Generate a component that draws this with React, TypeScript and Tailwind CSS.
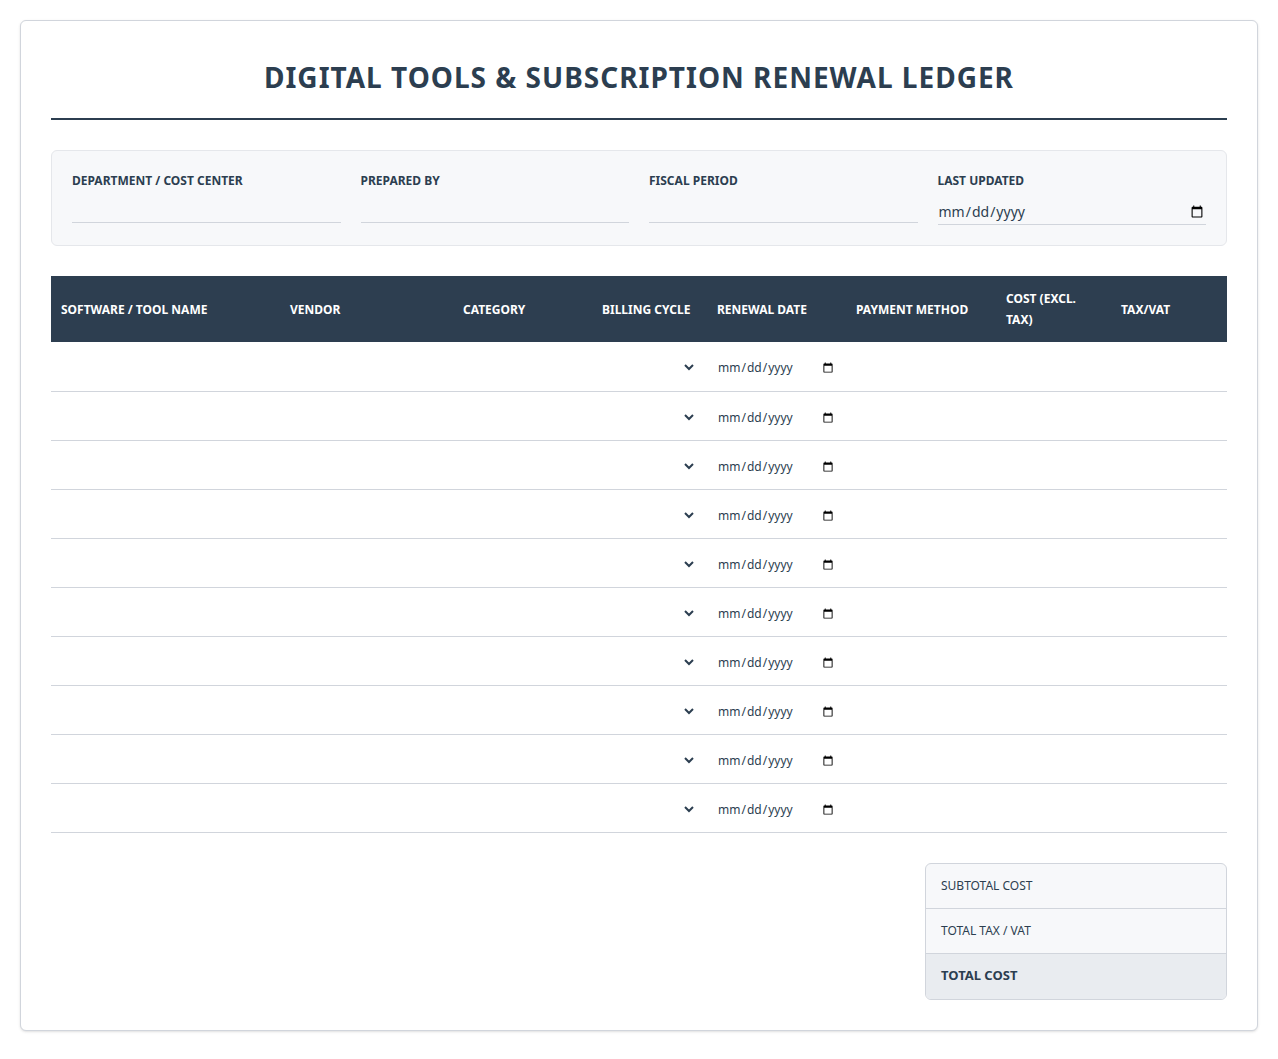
const cols = [
  { label: "SOFTWARE / TOOL NAME", w: "w-[229px]" },
  { label: "VENDOR", w: "w-[173px]" },
  { label: "CATEGORY", w: "w-[139px]" },
  { label: "BILLING CYCLE", w: "w-[115px]" },
  { label: "RENEWAL DATE", w: "w-[139px]" },
  { label: "PAYMENT METHOD", w: "w-[150px]" },
  { label: "COST (EXCL. TAX)", w: "w-[115px]" },
  { label: "TAX/VAT", w: "w-[116px]" },
]

const meta = ["DEPARTMENT / COST CENTER", "PREPARED BY", "FISCAL PERIOD", "LAST UPDATED"]

export default function App() {
  return (
    <div className="min-h-screen bg-white p-5 font-['Open_Sans',sans-serif] text-[#2c3e50]">
      <div className="rounded-md border border-gray-300 bg-white px-[30px] pb-[30px] pt-[35px] shadow-sm">
        <h1 className="text-center text-[28px] font-bold tracking-[1px] text-[#2c3e50]">
          DIGITAL TOOLS &amp; SUBSCRIPTION RENEWAL LEDGER
        </h1>
        <div className="mt-[20px] h-[2px] bg-[#2c3e50]" />

        <div className="mt-[30px] grid grid-cols-4 gap-5 rounded-md border border-gray-200 bg-[#f7f8fa] px-5 pb-5 pt-[22px]">
          {meta.map((m, i) => (
            <div key={m} className="flex flex-col">
              <label className="text-xs font-bold">{m}</label>
              {i === 3 ? (
                <input type="date" className="mt-[10px] h-[26px] border-b border-gray-300 bg-transparent text-sm outline-none" />
              ) : (
                <input className="mt-[10px] h-[24px] border-b border-gray-300 bg-transparent text-sm outline-none" />
              )}
            </div>
          ))}
        </div>

        <table className="mt-[30px] w-full table-fixed border-collapse">
          <thead>
            <tr className="h-[66px] bg-[#2d3e50] text-white">
              {cols.map((c) => (
                <th key={c.label} className={`${c.w} px-[10px] text-left text-xs font-bold leading-[21px]`}>
                  {c.label}
                </th>
              ))}
            </tr>
          </thead>
          <tbody>
            {Array.from({ length: 10 }).map((_, r) => (
              <tr key={r} className="h-[49px] border-b border-gray-300">
                <td />
                <td />
                <td />
                <td className="px-[10px]">
                  <select className="w-full bg-transparent text-xs outline-none" />
                </td>
                <td className="px-[10px]">
                  <input type="date" className="w-full bg-transparent text-xs outline-none" />
                </td>
                <td />
                <td />
                <td />
              </tr>
            ))}
          </tbody>
        </table>

        <div className="mt-[30px] flex justify-end">
          <div className="w-[302px] overflow-hidden rounded-md border border-gray-300 bg-[#f7f8fa] text-xs">
            <div className="flex h-[45px] items-center border-b border-gray-300 px-[15px]">SUBTOTAL COST</div>
            <div className="flex h-[45px] items-center border-b border-gray-300 px-[15px]">TOTAL TAX / VAT</div>
            <div className="flex h-[45px] items-center bg-[#e9ecf0] px-[15px] text-[13px] font-bold">TOTAL COST</div>
          </div>
        </div>
      </div>
    </div>
  )
}
